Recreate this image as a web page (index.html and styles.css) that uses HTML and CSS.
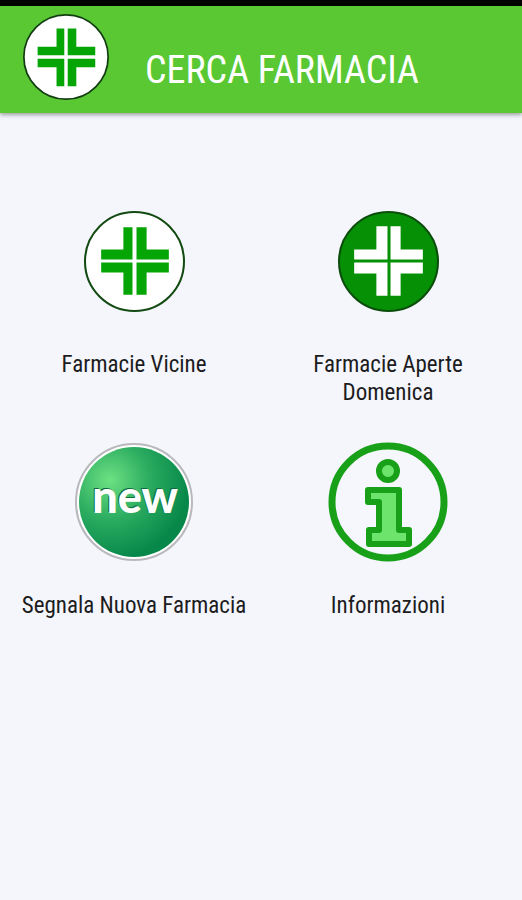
FILE: index.html
```html
<!DOCTYPE html>
<html lang="it">
<head>
    <meta charset="UTF-8">
    <meta name="viewport" content="width=device-width, initial-scale=1.0">
    <title>Cerca Farmacia</title>
    <link rel="stylesheet" href="styles.css">
</head>
<body>
    <div class="status-bar"></div>
    <header class="header">
        <svg class="logo" viewBox="0 0 100 100" aria-hidden="true">
            <circle cx="50" cy="50" r="49" fill="#fff" stroke="#123d12" stroke-width="2"/>
            <path fill="#06a506" d="M39 17h9v31H17V38h22zM52 17h10v21h22v10H52zM17 52h31v32h-9V62H17zM52 52h32v10H62v22H52z"/>
        </svg>
        <h1>CERCA FARMACIA</h1>
    </header>
    <main class="menu">
        <a class="item" href="#vicine">
            <span class="icon">
                <svg class="small" viewBox="0 0 100 100" aria-hidden="true">
                    <circle cx="50" cy="50" r="49" fill="#fff" stroke="#124a12" stroke-width="2"/>
                    <path fill="#06a506" d="M39 16h9v32H17V38h22zM52 16h10v22h22v10H52zM17 51h31v32h-9V61H17zM52 51h32v10H62v22H52z"/>
                </svg>
            </span>
            <span class="label">Farmacie Vicine</span>
        </a>
        <a class="item" href="#domenica">
            <span class="icon">
                <svg class="small" viewBox="0 0 100 100" aria-hidden="true">
                    <circle cx="50" cy="50" r="49" fill="#069006" stroke="#0b4d0b" stroke-width="2"/>
                    <path fill="#fff" d="M38 15h11v33H16V38h22zM52 15h10v23h22v10H52zM16 51h33v33H38V62H16zM52 51h32v11H62v22H52z"/>
                </svg>
            </span>
            <span class="label">Farmacie Aperte Domenica</span>
        </a>
        <a class="item" href="#segnala">
            <span class="icon">
                <svg viewBox="0 0 120 120" aria-hidden="true">
                    <defs>
                        <radialGradient id="ball" cx="0.28" cy="0.3" r="0.72">
                            <stop offset="0" stop-color="#6de183"/>
                            <stop offset="0.5" stop-color="#2bac60"/>
                            <stop offset="1" stop-color="#07884a"/>
                        </radialGradient>
                    </defs>
                    <circle cx="60" cy="60" r="58" fill="#fff" stroke="#b9b9bd" stroke-width="2"/>
                    <circle cx="60" cy="60" r="55" fill="url(#ball)"/>
                    <text class="new shade" x="60" y="70">new</text>
                    <text class="new" x="61" y="71">new</text>
                </svg>
            </span>
            <span class="label">Segnala Nuova Farmacia</span>
        </a>
        <a class="item" href="#informazioni">
            <span class="icon">
                <svg viewBox="0 0 120 120" aria-hidden="true">
                    <circle cx="60" cy="60" r="56" fill="#f5f7fc" stroke="#18a018" stroke-width="7"/>
                    <g fill="#6de56d" stroke="#18a018" stroke-width="6" stroke-linejoin="round">
                        <circle cx="60" cy="29" r="9"/>
                        <path d="M40 48h31v40h10v14H41V88h10V60H40z"/>
                    </g>
                </svg>
            </span>
            <span class="label">Informazioni</span>
        </a>
    </main>
</body>
</html>
```
FILE: styles.css
```css
:root {
    --green: #59c833;
    --background: #f4f6fb;
    --text: #1c1c1e;
}

* {
    box-sizing: border-box;
}

body {
    margin: 0;
    min-height: 100vh;
    background-color: var(--background);
    color: var(--text);
    font-family: "Roboto Condensed", "Liberation Sans Narrow", Roboto, sans-serif;
}

.status-bar {
    height: 6px;
    background-color: #000;
}

.header {
    display: flex;
    align-items: flex-start;
    gap: 36px;
    padding: 8px 23px 13px;
    background-color: var(--green);
    box-shadow: 0 2px 4px rgba(0, 0, 0, 0.35);
}

.logo {
    width: 86px;
    height: 86px;
    flex: none;
}

h1 {
    margin: 32px 0 0;
    color: #fff;
    font-size: 38px;
    font-weight: 400;
    line-height: 48px;
    white-space: nowrap;
}

.menu {
    display: grid;
    grid-template-columns: 1fr 1fr;
    row-gap: 35px;
    padding: 88px 7px 0;
}

.item {
    display: flex;
    flex-direction: column;
    align-items: center;
    gap: 30px;
    color: inherit;
    text-decoration: none;
}

.icon {
    display: flex;
    align-items: center;
    justify-content: center;
    width: 120px;
    height: 120px;
}

.icon svg {
    width: 120px;
    height: 120px;
}

.icon .small {
    width: 101px;
    height: 101px;
}

.label {
    max-width: 230px;
    font-size: 23px;
    line-height: 28px;
    text-align: center;
}

.new {
    fill: #fff;
    font-family: Lato, sans-serif;
    font-size: 45px;
    font-weight: 900;
    text-anchor: middle;
}

.shade {
    fill: #0b6b3a;
}
```
